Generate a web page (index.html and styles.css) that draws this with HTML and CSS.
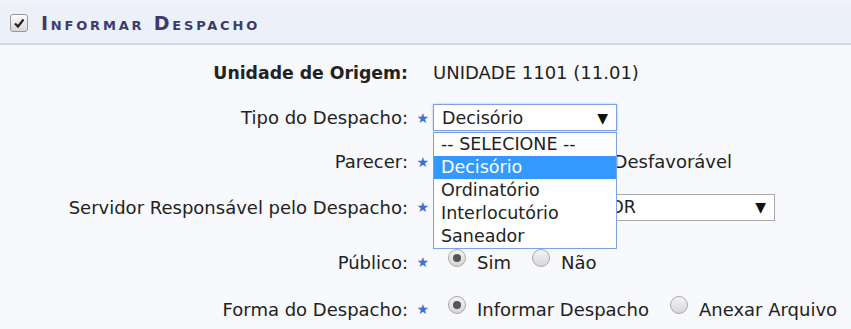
FILE: index.html
```html
<!DOCTYPE html>
<html lang="pt-BR">
<head>
    <meta charset="UTF-8">
    <title>Informar Despacho</title>
    <link rel="stylesheet" href="styles.css">
</head>
<body>
    <div class="painel">
        <div class="painel-titulo">
            <span class="check">
                <svg width="12" height="12" viewBox="0 0 12 12"><path d="M2 6.5 L5 9.5 L10.5 2.5" fill="none" stroke="#222" stroke-width="2.2"/></svg>
            </span>
            <h3>Informar Despacho</h3>
        </div>

        <table class="formulario">
            <tr class="linha-origem">
                <th class="forte">Unidade de Origem:</th>
                <td class="estrela"></td>
                <td>UNIDADE 1101 (11.01)</td>
            </tr>
            <tr class="linha-tipo">
                <th>Tipo do Despacho:</th>
                <td class="estrela">★</td>
                <td>
                    <div class="combo combo-tipo">
                        <span>Decisório</span><span class="seta">▼</span>
                        <ul class="lista">
                            <li>-- SELECIONE --</li>
                            <li class="ativo">Decisório</li>
                            <li>Ordinatório</li>
                            <li>Interlocutório</li>
                            <li>Saneador</li>
                        </ul>
                    </div>
                </td>
            </tr>
            <tr class="linha-parecer">
                <th>Parecer:</th>
                <td class="estrela">★</td>
                <td>
                    <div class="opcoes">
                        <span class="opcao"><span class="radio"></span>Favorável</span>
                        <span class="opcao"><span class="radio"></span>Desfavorável</span>
                    </div>
                </td>
            </tr>
            <tr class="linha-servidor">
                <th>Servidor Responsável pelo Despacho:</th>
                <td class="estrela">★</td>
                <td>
                    <div class="combo combo-servidor">
                        <span>SRA. ADMINISTRADOR</span><span class="seta">▼</span>
                    </div>
                </td>
            </tr>
            <tr class="linha-publico">
                <th>Público:</th>
                <td class="estrela">★</td>
                <td>
                    <div class="opcoes">
                        <span class="opcao"><span class="radio marcado"></span>Sim</span>
                        <span class="opcao"><span class="radio"></span>Não</span>
                    </div>
                </td>
            </tr>
            <tr class="linha-forma">
                <th>Forma do Despacho:</th>
                <td class="estrela">★</td>
                <td>
                    <div class="opcoes">
                        <span class="opcao"><span class="radio marcado"></span>Informar Despacho</span>
                        <span class="opcao"><span class="radio"></span>Anexar Arquivo</span>
                    </div>
                </td>
            </tr>
        </table>
    </div>
</body>
</html>
```

FILE: styles.css
```css
body {
    margin: 0;
    padding: 0;
    background: #f8f9fc;
    color: #222;
    font-family: "DejaVu Sans", Verdana, sans-serif;
    font-size: 18px;
}

.painel {
    width: 851px;
}

.painel-titulo {
    height: 45px;
    background: #ecf0f8;
    border-top: 3px solid #f2f4f9;
    border-bottom: 2px solid #cfd9ea;
    display: flex;
    align-items: center;
    padding-left: 10px;
    box-sizing: border-box;
}

.check {
    width: 16px;
    height: 16px;
    border: 1px solid #999;
    border-radius: 3px;
    background: linear-gradient(#fdfdfd, #d8d8d8);
    display: flex;
    align-items: center;
    justify-content: center;
}

.painel-titulo h3 {
    margin: 0 0 0 13px;
    font-size: 19px;
    font-variant: small-caps;
    letter-spacing: 2.8px;
    color: #3b3b6d;
}

.formulario {
    border-collapse: collapse;
    margin-top: 5px;
}

.formulario th {
    width: 408px;
    text-align: right;
    font-weight: normal;
    padding: 0;
    white-space: nowrap;
}

.formulario th.forte {
    font-weight: bold;
    font-size: 17.3px;
}

.formulario td {
    padding: 0;
    white-space: nowrap;
}

.linha-origem { height: 45px; }
.linha-tipo { height: 45px; }
.linha-parecer { height: 43px; }
.linha-servidor { height: 48px; }
.linha-publico { height: 52px; }
.linha-forma { height: 48px; }

.linha-publico th,
.linha-publico td {
    padding-top: 10px;
}

.linha-forma th,
.linha-forma td {
    padding-top: 4px;
}

.estrela {
    width: 21px;
    text-align: right;
    color: #3f6fd0;
    font-size: 14px;
}

.formulario td.estrela {
    padding-right: 4px;
}

.combo {
    position: relative;
    display: inline-flex;
    justify-content: space-between;
    align-items: center;
    height: 27px;
    padding: 0 8px;
    box-sizing: border-box;
    background: #fff;
    border: 1px solid #a9a9a9;
    font-size: 17.5px;
}

.combo-tipo {
    width: 184px;
    border: 1px solid #7aa2e4;
    box-shadow: 0 0 2px #9ebcf0;
}

.combo-servidor {
    width: 342px;
}

.seta {
    font-size: 14px;
    color: #111;
}

.lista {
    position: absolute;
    top: 27px;
    left: -1px;
    width: 184px;
    margin: 0;
    padding: 0;
    list-style: none;
    background: #fff;
    border: 1px solid #7aa2e4;
    box-sizing: border-box;
    z-index: 5;
}

.lista li {
    height: 23px;
    line-height: 23px;
    padding-left: 7px;
}

.lista li.ativo {
    background: #3399ff;
    color: #fff;
}

.opcoes {
    display: flex;
    align-items: center;
}

.opcao {
    display: flex;
    align-items: center;
    margin-right: 6px;
}

.radio {
    width: 18px;
    height: 18px;
    border: 1px solid #aaa;
    border-radius: 50%;
    background: linear-gradient(#f4f4f4, #d6d6d6);
    box-sizing: border-box;
    margin: 0 11px 8px 15px;
    position: relative;
}

.radio.marcado::after {
    content: "";
    position: absolute;
    left: 4px;
    top: 4px;
    width: 8px;
    height: 8px;
    border-radius: 50%;
    background: #555;
}
```
